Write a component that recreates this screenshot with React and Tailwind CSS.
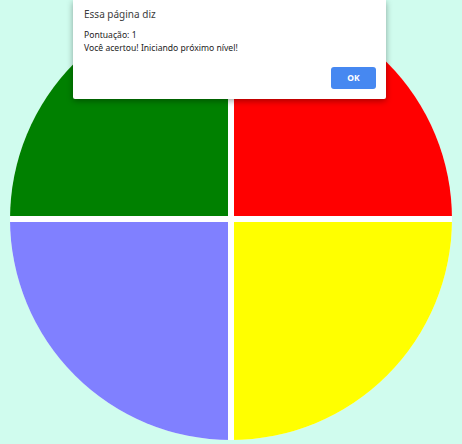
export default function App() {
  return (
    <div className="relative h-[444px] w-[462px] overflow-hidden bg-[#d0fcee]">
      {/* Game board */}
      <div className="ml-[10px] mt-[-2px] grid h-[442px] w-[442px] grid-cols-[218px_218px] grid-rows-[218px_218px] gap-[6px] overflow-hidden rounded-full bg-white">
        <div className="bg-[#008000]" />
        <div className="bg-[#ff0000]" />
        <div className="bg-[#8080ff]" />
        <div className="bg-[#ffff00]" />
      </div>

      {/* Alert dialog */}
      <div className="absolute left-[73px] top-0 h-[99px] w-[313px] rounded-b-[2px] bg-white font-['Noto_Sans',sans-serif] shadow-[0_2px_6px_rgba(0,0,0,0.35)]">
        <div className="pl-[11px] pt-[6px] text-[10px] leading-[16px] text-[#3c3c3c]">Essa página diz</div>
        <div className="pl-[11px] pt-[7px] text-[8.6px] leading-[13px] text-[#222]">
          <div>Pontuação: 1</div>
          <div>Você acertou! Iniciando próximo nível!</div>
        </div>
        <div className="flex justify-end pr-[10px] pt-[12px]">
          <div className="flex h-[22px] w-[45px] items-center justify-center rounded-[3px] bg-[#4688f1] text-[8.5px] font-bold text-white">
            OK
          </div>
        </div>
      </div>
    </div>
  );
}
